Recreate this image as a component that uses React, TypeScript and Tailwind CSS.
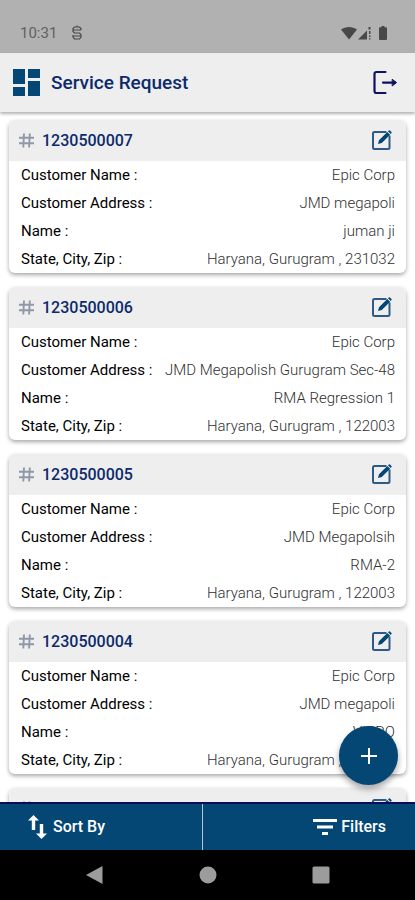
type ServiceRequest = {
    id: string;
    customer: string;
    address: string;
    name: string;
    location: string;
}

const requests: ServiceRequest[] = [
    { id: "1230500007", customer: "Epic Corp", address: "JMD megapoli", name: "juman ji", location: "Haryana, Gurugram , 231032" },
    { id: "1230500006", customer: "Epic Corp", address: "JMD Megapolish Gurugram Sec-48", name: "RMA Regression 1", location: "Haryana, Gurugram , 122003" },
    { id: "1230500005", customer: "Epic Corp", address: "JMD Megapolsih", name: "RMA-2", location: "Haryana, Gurugram , 122003" },
    { id: "1230500004", customer: "Epic Corp", address: "JMD megapoli", name: "VIPRO", location: "Haryana, Gurugram , 122003" },
    { id: "1230500003", customer: "Epic Corp", address: "JMD megapoli", name: "RMA-1", location: "Haryana, Gurugram , 122003" },
];

const StatusBar = () => {
    return <div className="flex h-[53px] shrink-0 items-center justify-between bg-[#b1b1b1] pt-3 pr-7 pl-5 text-[#484848]">
        <div className="flex items-center gap-3.5">
            <span className="text-[15px] leading-5 text-[#626262]">10:31</span>
            <svg viewBox="0 0 12 16" className="h-4 w-3" fill="none" stroke="currentColor" strokeWidth="1.200" aria-hidden="true">
                <path d="M10 5V3.500L8.500 2h-5L2 3.500V6.500L3.500 8h5L10 9.500V12l-1.500 2h-5L2 12v-2M2 5h8M2 11h8M6 .5v2" />
            </svg>
        </div>
        <div className="flex items-center">
            <svg viewBox="0 0 16 14" className="h-3.5 w-4" fill="currentColor" aria-hidden="true">
                <path d="M0 3.500C4.500 0 11.500 0 16 3.500L8 13.500z" />
            </svg>
            <svg viewBox="0 0 14 14" className="mr-2 h-3.5 w-3.5" fill="currentColor" aria-hidden="true">
                <path d="M1 13.500 10 4.500v9zM11.500 1h2v2.500h-2zM12 5h1.500v3H12zM12 9.500h1.500v1.500H12zM12 12.200h1.500v1.300H12z" />
            </svg>
            <svg viewBox="0 0 8 14" className="h-3.5 w-2" fill="currentColor" aria-hidden="true">
                <path d="M2.500 0h3v1.200H7a1 1 0 0 1 1 1V13a1 1 0 0 1-1 1H1a1 1 0 0 1-1-1V2.200a1 1 0 0 1 1-1h1.500z" />
            </svg>
        </div>
    </div>
}

const Header = () => {
    return <header className="z-10 flex h-[59px] shrink-0 items-center justify-between bg-[#eeeeee] pr-[17px] pl-[13px] text-[#0c2a6b] shadow-[0_2px_3px_rgba(0,0,0,0.3)]">
        <div className="flex items-center gap-[11px]">
            <svg viewBox="0 0 27 27" className="h-[27px] w-[27px]" fill="#054774" aria-hidden="true">
                <path d="M0 0h12v15H0zM15 0h12v9H15zM0 18h12v9H0zM15 12h12v15H15z" />
            </svg>
            <h1 className="text-[19px] leading-6 font-medium">Service Request</h1>
        </div>
        <button type="button" aria-label="Log out">
            <svg viewBox="0 0 26 26" className="h-[26px] w-[26px]" fill="none" stroke="#10125f" strokeWidth="2.200" strokeLinecap="round" aria-hidden="true">
                <path d="M13.500 2H4.500Q2.500 2 2.500 4v17q0 2 2 2h9M11 12.600h12" />
                <path d="m20.500 9.500 4 3.100-4 3.100z" fill="#10125f" strokeWidth="1" />
            </svg>
        </button>
    </header>
}

type RowParameters = {
    label: string;
    value: string;
}

const Row = ({ label, value }: RowParameters) => {
    return <div className="flex justify-between leading-7">
        <dt className="shrink-0 text-black">{label} :</dt>
        <dd className="truncate font-light text-[#303030]">{value}</dd>
    </div>
}

const RequestCard = ({ request }: { request: ServiceRequest }) => {
    return <article className="shrink-0 overflow-hidden rounded-md bg-white shadow-[0_2px_4px_rgba(0,0,0,0.35)]">
        <div className="flex h-[41px] items-center justify-between bg-[#eeeeee] pr-3.5 pl-2.5">
            <div className="flex items-center gap-2">
                <svg viewBox="0 0 15 15" className="h-[15px] w-[15px]" fill="none" stroke="#8f98a8" strokeWidth="1.900" aria-hidden="true">
                    <path d="M5 .5 4.300 14.500M10.800 .5 10.100 14.500M0 4.800H15M0 10.200h15" />
                </svg>
                <h2 className="text-base leading-5 font-medium text-[#0c2a6b]">{request.id}</h2>
            </div>
            <button type="button" aria-label={"Edit " + request.id}>
                <svg viewBox="0 0 21 21" className="h-[21px] w-[21px]" fill="none" stroke="#2f5a85" strokeWidth="2" aria-hidden="true">
                    <path d="M15.500 2H3.500Q2 2 2 3.500v14Q2 19 3.500 19H17q1.500 0 1.500-1.500V5.500" />
                    <path d="M7 14 8 10.200 16.300 1.900l2.800 2.800-8.300 8.300zM17 1.200l.8-.8q.6-.4 1.200 0l1.500 1.500q.4.600 0 1.200l-.8.800z" fill="#054774" stroke="none" />
                </svg>
            </button>
        </div>
        <dl className="pr-[11px] pl-3 text-[15px]">
            <Row label="Customer Name" value={request.customer} />
            <Row label="Customer Address" value={request.address} />
            <Row label="Name" value={request.name} />
            <Row label="State, City, Zip" value={request.location} />
        </dl>
    </article>
}

const ActionBar = () => {
    return <div className="z-10 flex h-12 shrink-0 border-t-2 border-[#0b0c5c] bg-[#054774] text-base leading-5 font-medium text-white">
        <button type="button" className="flex w-[49%] items-center gap-1.5 border-r border-[#b5c6d4] pl-7">
            <svg viewBox="0 0 19 24" className="h-6 w-[19px]" fill="currentColor" aria-hidden="true">
                <path d="M5.500 0 11 5.500H7.200V15H3.800V5.500H0zM13.500 24 8 18.500h3.800V9h3.400v9.500H19z" />
            </svg>
            Sort By
        </button>
        <button type="button" className="flex flex-1 items-center justify-end gap-1 pr-[29px]">
            <svg viewBox="0 0 24 16" className="h-4 w-6" fill="currentColor" aria-hidden="true">
                <path d="M0 0h24v3H0zM4 6.500h16v3H4zM9 13h6v3H9z" />
            </svg>
            Filters
        </button>
    </div>
}

const NavigationBar = () => {
    return <nav className="z-10 flex h-[50px] shrink-0 items-center justify-around bg-black px-[38px] text-[#9c9c9c]">
        <button type="button" aria-label="Back">
            <svg viewBox="0 0 18 18" className="h-[18px] w-[18px]" fill="currentColor" aria-hidden="true"><path d="M0 9 16.500 0v18z" /></svg>
        </button>
        <button type="button" aria-label="Home">
            <svg viewBox="0 0 18 18" className="h-[18px] w-[18px]" fill="currentColor" aria-hidden="true"><circle cx="9" cy="9" r="8.500" /></svg>
        </button>
        <button type="button" aria-label="Recent apps">
            <svg viewBox="0 0 18 18" className="h-[18px] w-[18px]" fill="currentColor" aria-hidden="true"><rect width="17" height="17" x=".5" y=".5" rx="1.500" /></svg>
        </button>
    </nav>
}

const App = () => {
    return <div className="flex h-screen flex-col bg-white font-['Roboto',sans-serif]">
        <StatusBar />
        <Header />
        <div className="relative min-h-0 flex-1">
            <main className="flex h-full flex-col gap-3.5 overflow-y-auto px-[9px] py-2 [scrollbar-width:none]">
                {requests.map((request) => <RequestCard key={request.id} request={request} />)}
            </main>
            <button type="button" aria-label="Add service request" className="absolute right-[17px] bottom-[17px] flex size-[59px] items-center justify-center rounded-full bg-[#054774] text-white shadow-[0_4px_6px_rgba(0,0,0,0.35)]">
                <svg viewBox="0 0 16 16" className="size-4" fill="none" stroke="currentColor" strokeWidth="2" aria-hidden="true"><path d="M8 0v16M0 8h16" /></svg>
            </button>
        </div>
        <ActionBar />
        <NavigationBar />
    </div>
}

export default App;
